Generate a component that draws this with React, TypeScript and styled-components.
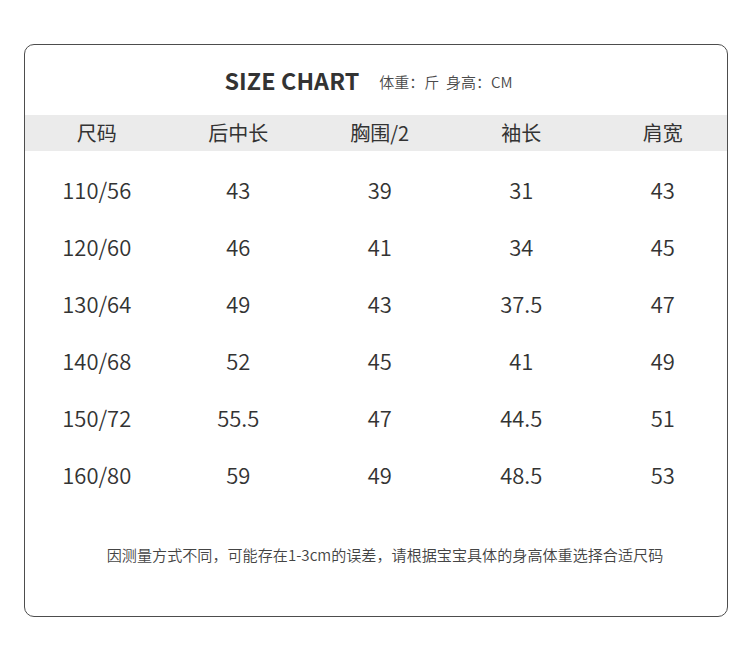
import React from "react";
import styled, { createGlobalStyle } from "styled-components";

const Global = createGlobalStyle`
  html, body { margin: 0; padding: 0; background: #ffffff; }
  body { font-family: "Noto Sans CJK SC", "Noto Sans", sans-serif; color: #333333; }
`;

const Page = styled.div`
  width: 750px;
  height: 652px;
  padding: 44px 0 0 24px;
  box-sizing: border-box;
`;

const Card = styled.div`
  width: 704px;
  height: 573px;
  box-sizing: border-box;
  border: 1.5px solid #4d4d4d;
  border-radius: 10px;
  display: flex;
  flex-direction: column;
  overflow: hidden;
`;

const TitleRow = styled.div`
  height: 70px;
  padding-top: 1px;
  padding-right: 15px;
  box-sizing: border-box;
  display: flex;
  align-items: center;
  justify-content: center;
  gap: 20px;
`;

const Title = styled.h1`
  margin: 0;
  font-size: 23.3px;
  font-weight: 700;
  color: #333333;
  letter-spacing: 0.1px;
  line-height: 1;
`;

const Units = styled.span`
  font-size: 15px;
  font-weight: 350;
  color: #4a4a4a;
  line-height: 1;
  padding-top: 2px;
`;

const Grid = styled.div<{ $head?: boolean }>`
  display: grid;
  grid-template-columns: repeat(5, 141.5px);
  height: ${(p) => (p.$head ? "36px" : "57px")};
  align-items: center;
  background: ${(p) => (p.$head ? "#ebebeb" : "transparent")};
  padding-left: 1px;
`;

const Cell = styled.div<{ $head?: boolean }>`
  text-align: center;
  font-size: ${(p) => (p.$head ? "20px" : "22px")};
  font-weight: ${(p) => (p.$head ? 400 : 350)};
  color: #333333;
  line-height: 1;
`;

const Body = styled.div`
  padding-top: 9px;
  display: flex;
  flex-direction: column;
`;

const Note = styled.p`
  margin: 0;
  margin-top: 45px;
  padding-left: 18px;
  text-align: center;
  font-size: 15.1px;
  font-weight: 350;
  color: #444444;
  line-height: 1;
`;

const headers = ["尺码", "后中长", "胸围/2", "袖长", "肩宽"];
const rows = [
  ["110/56", "43", "39", "31", "43"],
  ["120/60", "46", "41", "34", "45"],
  ["130/64", "49", "43", "37.5", "47"],
  ["140/68", "52", "45", "41", "49"],
  ["150/72", "55.5", "47", "44.5", "51"],
  ["160/80", "59", "49", "48.5", "53"],
];

export default function App() {
  return (
    <Page>
      <Global />
      <Card>
        <TitleRow>
          <Title>SIZE CHART</Title>
          <Units>体重：斤&nbsp;&nbsp;身高：CM</Units>
        </TitleRow>
        <Grid $head>
          {headers.map((h) => (
            <Cell key={h} $head>
              {h}
            </Cell>
          ))}
        </Grid>
        <Body>
          {rows.map((r) => (
            <Grid key={r[0]}>
              {r.map((c, i) => (
                <Cell key={i}>{c}</Cell>
              ))}
            </Grid>
          ))}
        </Body>
        <Note>因测量方式不同，可能存在1-3cm的误差，请根据宝宝具体的身高体重选择合适尺码</Note>
      </Card>
    </Page>
  );
}
